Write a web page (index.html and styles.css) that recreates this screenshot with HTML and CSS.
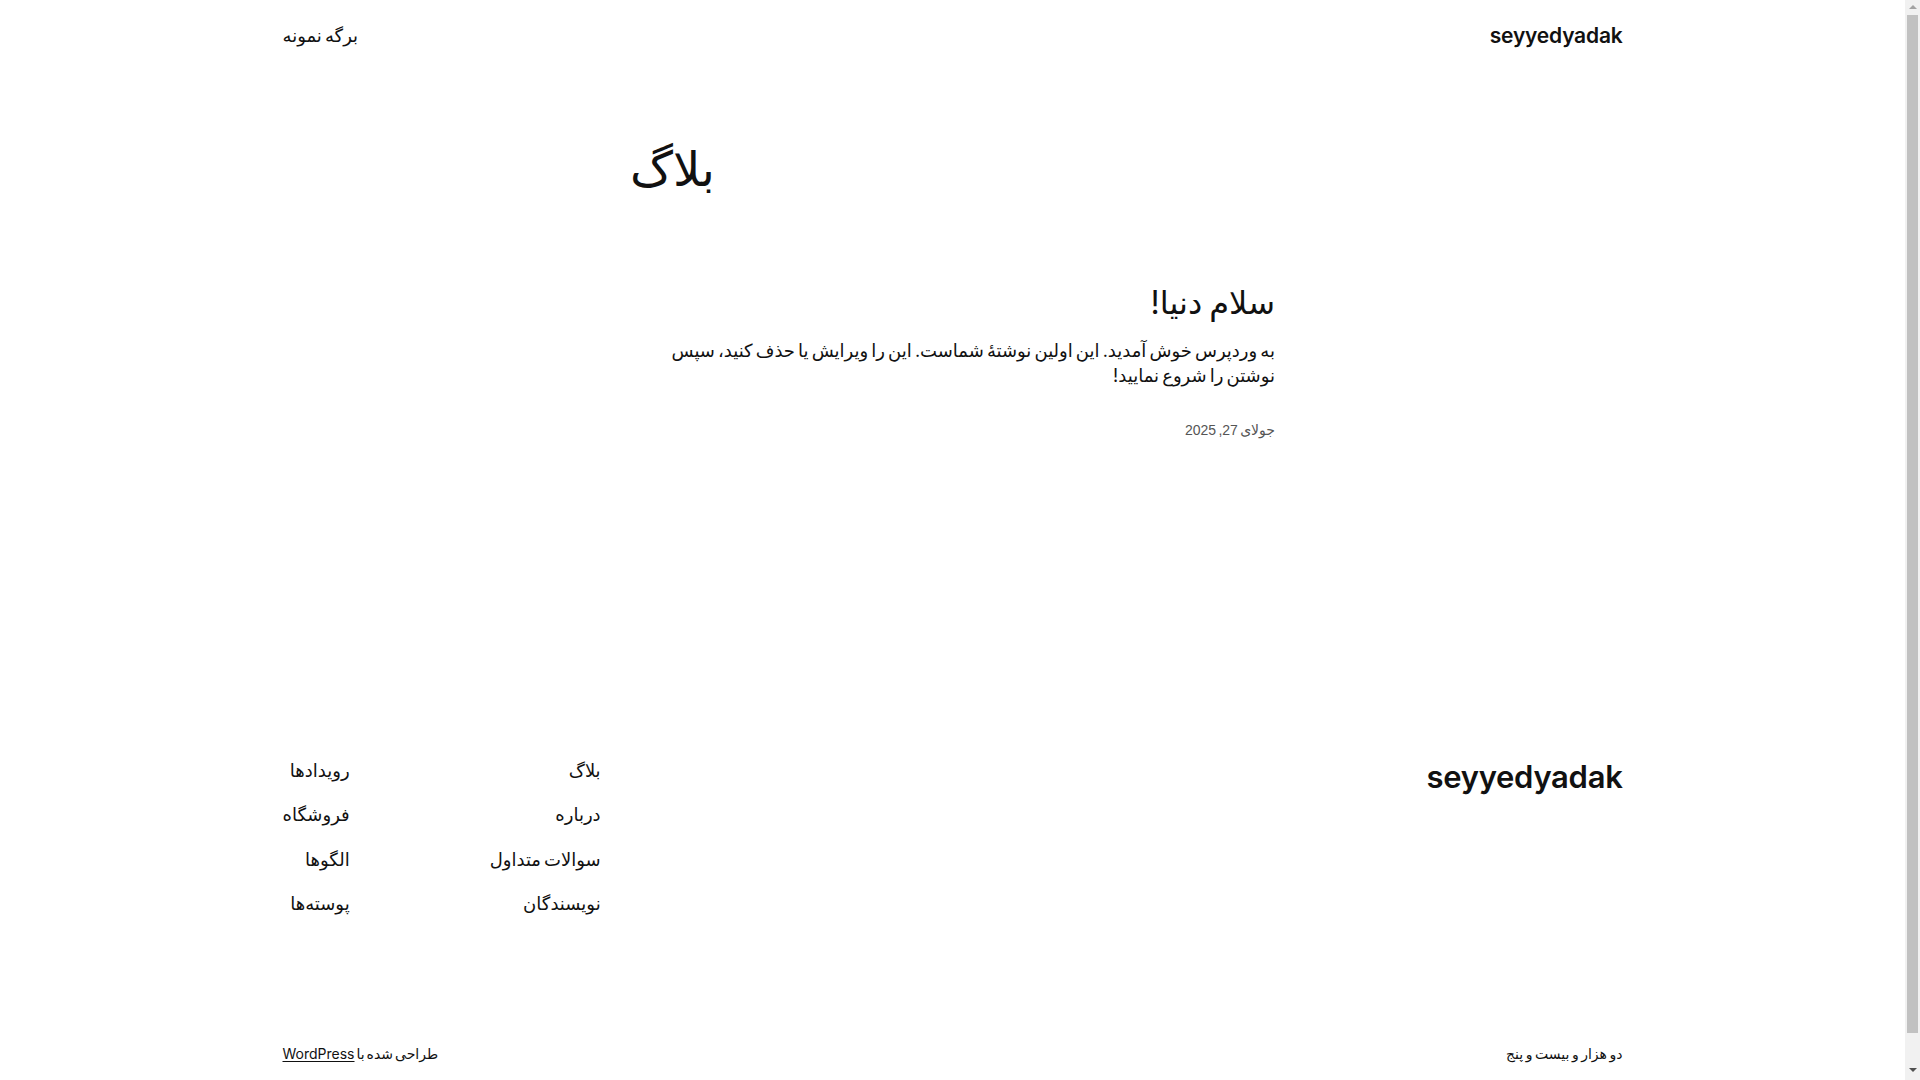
FILE: index.html
```html
<!DOCTYPE html>
<html lang="fa" dir="rtl">
<head>
<meta charset="utf-8">
<title>بلاگ – seyyedyadak</title>
<link rel="stylesheet" href="styles.css">
</head>
<body>
<div class="page">
<header class="site-header">
  <div class="wide header-row">
    <a class="site-title" href="#">seyyedyadak</a>
    <nav class="header-nav"><a href="#">برگه نمونه</a></nav>
  </div>
</header>
<main class="site-main">
  <div class="content">
    <h1 class="query-title">بلاگ</h1>
    <article class="post">
      <h2 class="post-title"><a href="#">سلام دنیا!</a></h2>
      <p class="post-excerpt">به وردپرس خوش آمدید. این اولین نوشتهٔ شماست. این را ویرایش یا حذف کنید، سپس نوشتن را شروع نمایید!</p>
      <div class="post-date">جولای 27, 2025</div>
    </article>
  </div>
</main>
<footer class="site-footer">
  <div class="wide footer-row">
    <a class="footer-title" href="#">seyyedyadak</a>
    <div class="footer-navs">
      <nav class="footer-nav">
        <a href="#">بلاگ</a>
        <a href="#">درباره</a>
        <a href="#">سوالات متداول</a>
        <a href="#">نویسندگان</a>
      </nav>
      <nav class="footer-nav">
        <a href="#">رویدادها</a>
        <a href="#">فروشگاه</a>
        <a href="#">الگوها</a>
        <a href="#">پوسته‌ها</a>
      </nav>
    </div>
  </div>
  <div class="wide footer-bottom">
    <span class="copyright">دو هزار و بیست و پنج</span>
    <span class="credit">طراحی شده با <a href="#">WordPress</a></span>
  </div>
</footer>
</div>
<div class="scrollbar" aria-hidden="true">
  <span class="sb-arrow sb-up"></span>
  <span class="sb-thumb"></span>
  <span class="sb-arrow sb-down"></span>
</div>
</body>
</html>
```
FILE: styles.css
```css
html, body {
  margin: 0;
  padding: 0;
}
body {
  background: #ffffff;
  color: #111111;
  font-family: Inter, "DejaVu Sans", sans-serif;
  font-size: 18px;
  line-height: 25px;
  direction: rtl;
  word-spacing: -0.11em;
}
.page {
  margin-right: 15px;
}
a {
  color: #111111;
  text-decoration: none;
}
.wide {
  max-width: 1340px;
  margin: 0 auto;
}
.header-row {
  height: 70px;
  display: flex;
  align-items: center;
  justify-content: space-between;
}
.site-title {
  font-size: 21px;
  font-weight: 600;
  letter-spacing: -0.2px;
}
.header-nav a {
  font-size: 18px;
}
.content {
  max-width: 645px;
  margin: 0 auto;
}
.query-title {
  margin: 70px 0 0 0;
  font-size: 48px;
  line-height: 1.2;
  font-weight: 400;
  text-align: left;
}
.post {
  margin-top: 86px;
}
.post-title {
  margin: 0;
  font-size: 32px;
  line-height: 1.2;
  font-weight: 400;
}
.post-excerpt {
  margin: 16px 0 0 0;
  font-size: 18px;
  line-height: 25px;
}
.post-date {
  margin-top: 32px;
  font-family: "Liberation Sans", "DejaVu Sans", sans-serif;
  font-size: 14px;
  line-height: 20px;
  color: #555555;
  word-spacing: -1.6px;
}
.site-footer {
  margin-top: 318px;
  padding-bottom: 47px;
}
.footer-row {
  display: flex;
  justify-content: space-between;
  align-items: flex-start;
}
.footer-title {
  font-size: 31px;
  line-height: 38px;
  font-weight: 600;
  letter-spacing: -0.3px;
}
.footer-navs {
  display: flex;
  gap: 140px;
}
.footer-nav {
  display: flex;
  flex-direction: column;
  gap: 19.5px;
}
.footer-nav a {
  font-size: 18px;
  line-height: 25px;
}
.footer-bottom {
  margin-top: 127.5px;
  display: flex;
  justify-content: space-between;
  font-size: 14px;
  line-height: 20px;
}
.copyright {
  word-spacing: -1.4px;
  letter-spacing: -0.2px;
}
.credit a {
  text-decoration: underline;
  text-underline-offset: 2px;
}
.scrollbar {
  position: fixed;
  top: 0;
  right: 0;
  width: 15px;
  height: 100vh;
  background: #f1f1f1;
  display: flex;
  flex-direction: column;
  align-items: center;
}
.sb-arrow {
  width: 0;
  height: 0;
  border-left: 4px solid transparent;
  border-right: 4px solid transparent;
}
.sb-up {
  margin-top: 5px;
  border-bottom: 4px solid #a3a3a3;
}
.sb-thumb {
  margin-top: 6px;
  width: 11px;
  height: 1018px;
  background: #c1c1c1;
}
.sb-down {
  margin-top: 35px;
  border-top: 4px solid #505050;
}
```
